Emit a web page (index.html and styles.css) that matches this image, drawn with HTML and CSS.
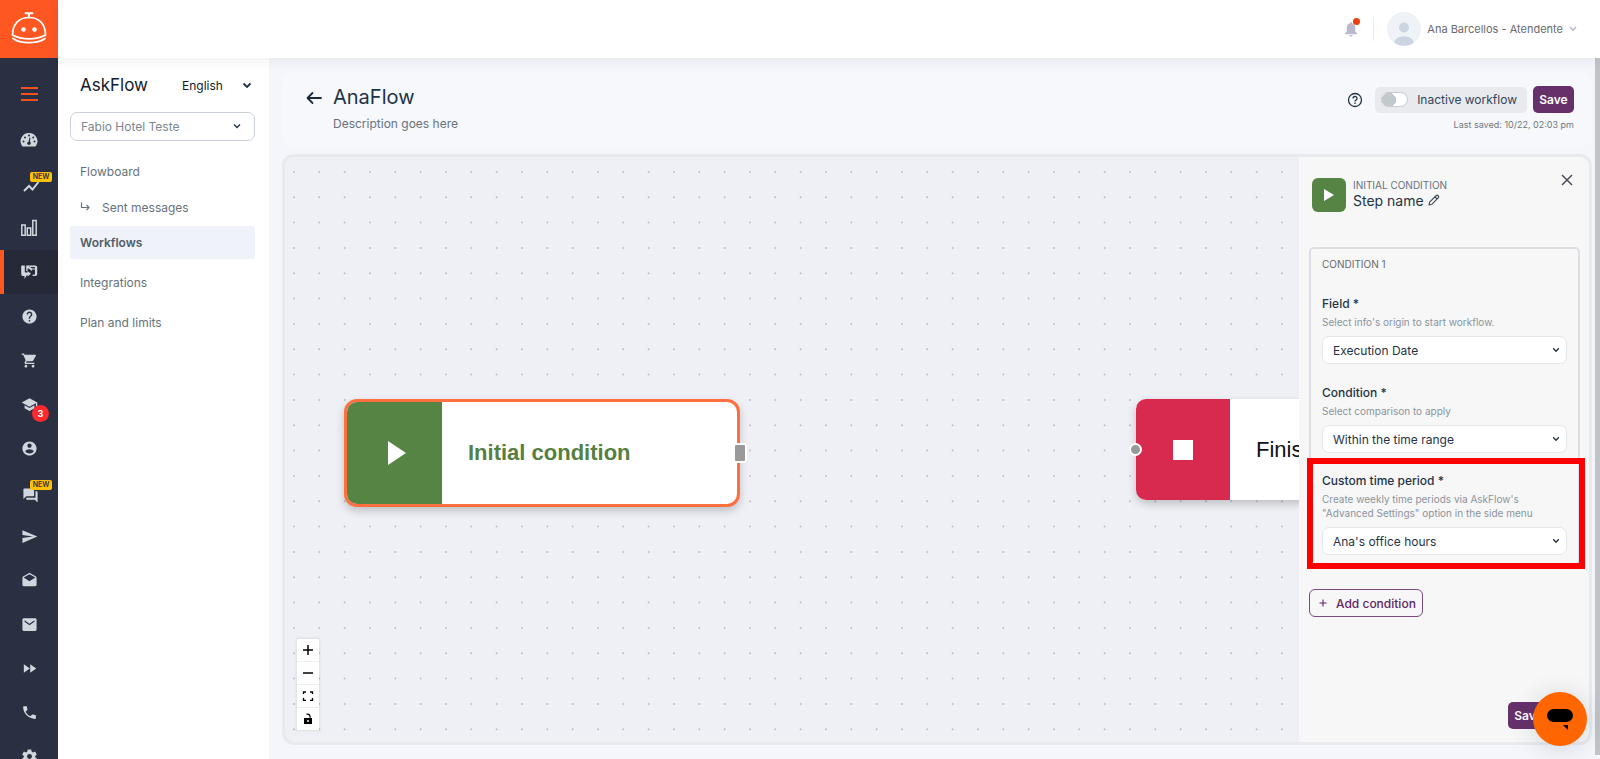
FILE: index.html
```
<!DOCTYPE html>
<html lang="en">
<head>
<meta charset="utf-8">
<title>AskFlow - Workflows</title>
<link rel="stylesheet" href="styles.css">
</head>
<body>

<!-- icon rail -->
<nav class="rail">
  <a class="logo" href="#" aria-label="Home">
    <svg width="36" height="32" viewBox="0 0 36 32" fill="none" stroke="#fff" stroke-width="1.700" stroke-linecap="round">
      <path d="M14.500 1.300h7M18 1.500v4" stroke-width="2"/>
      <path d="M1.500 23C1.500 12 8 5.500 18 5.500S34.500 12 34.500 23C30 25.500 25 26.800 18 26.800S6 25.500 1.500 23z"/>
      <path d="M2 26.500c4 3 9.500 4.200 16 4.200s12-1.200 16-4.200"/>
      <circle cx="12.500" cy="17.500" r="2.300" fill="#fff" stroke="none"/>
      <circle cx="23.500" cy="17.500" r="2.300" fill="#fff" stroke="none"/>
    </svg>
  </a>
  <button class="burger" aria-label="Menu"><span></span><span></span><span></span></button>
  <a class="item" href="#" aria-label="Dashboard">
    <svg width="18" height="16" viewBox="0 0 18 16"><path d="M9 1a8.300 8.300 0 0 0-7.100 12.800q.3.600 1 .6h12.200q.7 0 1-.6A8.300 8.300 0 0 0 9 1z"/><g fill="#2a2f42"><circle cx="3.500" cy="9.500" r="1"/><circle cx="5" cy="5.500" r="1"/><circle cx="9" cy="3.600" r="1"/><circle cx="13.200" cy="5.500" r="1"/><circle cx="14.500" cy="9.500" r="1"/><circle cx="9" cy="11.300" r="1.800"/><path d="M8.400 11l1-5.500 1 .2-.6 5.600z"/></g></svg>
  </a>
  <a class="item low" href="#" aria-label="Trends">
    <svg width="18" height="14" viewBox="0 0 18 14"><path d="M2 11l5-5 3.500 3.500L16.500 2" fill="none" stroke="#cfd8dc" stroke-width="2"/></svg>
    <span class="new">NEW</span>
  </a>
  <a class="item" href="#" aria-label="Reports">
    <svg width="18" height="18" viewBox="0 0 18 18"><path d="M1.800 6h3.400v10.300H1.800zM7.300 9h3.400v7.300H7.300zM12.800 1.500h3.400v14.800h-3.400z" fill="none" stroke="#cfd8dc" stroke-width="1.500"/></svg>
  </a>
  <a class="item active" href="#" aria-label="AskFlow">
    <svg width="18" height="16" viewBox="0 0 18 16"><path d="M2 1.500h2.800v6.300q0 .7.700.7h2V7L11 9.800l-3.500 2.800V11H7l-2.500 4v-3H3q-1.800 0-1.800-2V2.300q0-.8.8-.8zM6.200 1.500h9.300q1.700 0 1.700 1.700v7q0 1.800-1.700 1.800h-3.300l1-1.500H15V5.500h-3V7L8.700 4.600H7.500V7H6.200z"/><path d="M9 2.200l3 2.200h3V3H9z" fill="#252938"/></svg>
  </a>
  <a class="item" href="#" aria-label="Help">
    <svg width="17" height="17" viewBox="0 0 24 24"><path d="M12 2C6.480 2 2 6.480 2 12s4.480 10 10 10 10-4.480 10-10S17.520 2 12 2zm1 17h-2v-2h2v2zm2.070-7.750l-.9.920C13.450 12.900 13 13.500 13 15h-2v-.5c0-1.100.450-2.100 1.170-2.830l1.240-1.260c.370-.360.590-.860.590-1.410 0-1.100-.9-2-2-2s-2 .9-2 2H8c0-2.210 1.790-4 4-4s4 1.790 4 4c0 .880-.360 1.680-.930 2.250z"/></svg>
  </a>
  <a class="item" href="#" aria-label="Shop">
    <svg width="17" height="17" viewBox="0 0 24 24"><path d="M7 18c-1.100 0-1.990.9-1.990 2S5.900 22 7 22s2-.9 2-2-.9-2-2-2zM1 2v2h2l3.600 7.590-1.350 2.450c-.160.280-.250.610-.250.960 0 1.100.9 2 2 2h12v-2H7.420c-.140 0-.250-.110-.250-.250l.03-.120.9-1.630h7.450c.750 0 1.410-.410 1.750-1.030l3.580-6.490A1 1 0 0 0 20 4H5.210l-.940-2H1zm16 16c-1.100 0-1.990.9-1.990 2s.890 2 1.990 2 2-.9 2-2-.9-2-2-2z"/></svg>
  </a>
  <a class="item" href="#" aria-label="Academy">
    <svg width="17" height="17" viewBox="0 0 24 24"><path d="M5 13.180v4L12 21l7-3.820v-4L12 17l-7-3.820zM12 3L1 9l11 6 9-4.910V17h2V9L12 3z"/></svg>
    <span class="count">3</span>
  </a>
  <a class="item" href="#" aria-label="Account">
    <svg width="17" height="17" viewBox="0 0 24 24"><path d="M12 2C6.480 2 2 6.480 2 12s4.480 10 10 10 10-4.480 10-10S17.520 2 12 2zm0 3c1.660 0 3 1.340 3 3s-1.340 3-3 3-3-1.340-3-3 1.340-3 3-3zm0 14.200c-2.500 0-4.710-1.280-6-3.220.03-1.990 4-3.080 6-3.080 1.990 0 5.970 1.090 6 3.080-1.290 1.940-3.500 3.220-6 3.220z"/></svg>
  </a>
  <a class="item low" href="#" aria-label="Chats">
    <svg width="17" height="17" viewBox="0 0 24 24"><path d="M21 6h-2v9H6v2c0 .550.450 1 1 1h11l4 4V7c0-.550-.450-1-1-1zm-4 6V3c0-.550-.450-1-1-1H3c-.550 0-1 .450-1 1v14l4-4h10c.550 0 1-.450 1-1z"/></svg>
    <span class="new">NEW</span>
  </a>
  <a class="item" href="#" aria-label="Send">
    <svg width="17" height="17" viewBox="0 0 24 24"><path d="M2.010 21L23 12 2.010 3 2 10l15 2-15 2z"/></svg>
  </a>
  <a class="item" href="#" aria-label="Drafts">
    <svg width="17" height="17" viewBox="0 0 24 24"><path d="M21.990 8c0-.720-.370-1.350-.940-1.700L12 1 2.950 6.300C2.380 6.650 2 7.280 2 8v10c0 1.100.9 2 2 2h16c1.100 0 2-.9 2-2l-.010-10zM12 13L3.740 7.840 12 3l8.260 4.840L12 13z"/></svg>
  </a>
  <a class="item" href="#" aria-label="Mail">
    <svg width="17" height="17" viewBox="0 0 24 24"><path d="M20 3H4c-1.100 0-2 .9-2 2v14c0 1.100.9 2 2 2h16c1.100 0 2-.9 2-2V5c0-1.100-.9-2-2-2zm-1 5l-7 5-7-5V6l7 5 7-5v2z"/></svg>
  </a>
  <a class="item" href="#" aria-label="Forward">
    <svg width="17" height="17" viewBox="0 0 24 24"><path d="M4 18l8.500-6L4 6v12zm9-12v12l8.500-6L13 6z"/></svg>
  </a>
  <a class="item" href="#" aria-label="Calls">
    <svg width="17" height="17" viewBox="0 0 24 24"><path d="M6.620 10.790c1.440 2.830 3.760 5.140 6.590 6.590l2.200-2.200c.270-.270.670-.360 1.020-.240 1.120.370 2.330.570 3.570.570.550 0 1 .450 1 1V20c0 .550-.450 1-1 1-9.390 0-17-7.610-17-17 0-.550.450-1 1-1h3.500c.550 0 1 .450 1 1 0 1.250.2 2.450.570 3.570.110.350.030.740-.250 1.020l-2.200 2.200z"/></svg>
  </a>
  <a class="item" href="#" aria-label="Settings">
    <svg width="17" height="17" viewBox="0 0 24 24"><path fill-rule="evenodd" d="M9.500 2h5l.5 3 2 1.200 2.900-1.100 2.400 4.200-2.300 1.900v1.700l2.300 1.900-2.400 4.200-2.900-1.100L15 19l-.5 3h-5L9 19l-2-1.200-2.900 1.100-2.400-4.200L4 12.900v-1.700L1.700 9.300l2.400-4.200L7 6.200 9 5zM12 8.500a3.500 3.500 0 1 0 0 7 3.500 3.500 0 0 0 0-7z"/></svg>
  </a>
</nav>

<div class="page">
  <header class="topbar">
    <button class="bell" aria-label="Notifications">
      <svg width="14" height="16" viewBox="0 0 14 16"><path d="M7 1q-1 0-1 1.200C3.500 2.800 2.800 5 2.800 7v3.500L1 12.300v.9h12v-.9l-1.800-1.800V7c0-2-.7-4.200-3.200-4.800Q8 1 7 1zM5.400 14a1.600 1.600 0 0 0 3.200 0z" fill="#b8b9cb"/></svg>
      <span class="dot"></span>
    </button>
    <button class="user">
      <svg class="avatar" width="34" height="34" viewBox="0 0 34 34"><circle cx="17" cy="17" r="17" fill="#eff3f7"/><circle cx="17" cy="15.500" r="5" fill="#cbd5e2"/><path d="M7 30.500a10.500 9 0 0 1 20 0A17 17 0 0 1 7 30.500z" fill="#cbd5e2"/></svg>
      <span>Ana Barcellos - Atendente</span>
      <svg width="8" height="6" viewBox="0 0 8 6"><path d="M1 1l3 3.300L7 1" fill="none" stroke="#b3b5c9" stroke-width="1.300"/></svg>
    </button>
  </header>

  <div class="body">
    <aside class="side">
      <div class="side-head">
        <h1>AskFlow</h1>
        <div class="pick lang">
          <select aria-label="Language"><option>English</option></select>
          <svg width="10" height="7" viewBox="0 0 10 7"><path d="M1.500 1.500L5 5l3.500-3.500"/></svg>
        </div>
      </div>
      <div class="pick hotel">
        <select aria-label="Hotel"><option>Fabio Hotel Teste</option></select>
        <svg width="10" height="7" viewBox="0 0 10 7"><path d="M2 1.500l3 3 3-3"/></svg>
      </div>
      <ul class="menu">
        <li><a href="#">Flowboard</a></li>
        <li class="sub"><a href="#"><svg width="10" height="11" viewBox="0 0 10 11"><path d="M1.500.500V5.500H9M6.500 2.800L9 5.500 6.500 8.200" fill="none" stroke="#66727c" stroke-width="1.200"/></svg>Sent messages</a></li>
        <li class="on"><a href="#">Workflows</a></li>
        <li><a href="#">Integrations</a></li>
        <li><a href="#">Plan and limits</a></li>
      </ul>
    </aside>

    <main class="main">
      <section class="flow-head">
        <button class="back" aria-label="Back">
          <svg width="16" height="14" viewBox="0 0 16 14"><path d="M6.500 2L1.500 7l5 5M1.800 7H15" fill="none" stroke="#1b2b3c" stroke-width="1.800" stroke-linecap="round" stroke-linejoin="round"/></svg>
        </button>
        <div class="title">
          <h2>AnaFlow</h2>
          <p>Description goes here</p>
        </div>
        <div class="tools">
          <div class="tools-row">
            <button class="help" aria-label="Help">
              <svg width="16" height="16" viewBox="0 0 16 16" fill="none" stroke="#1f3347" stroke-width="1.300"><circle cx="8" cy="8" r="6.500"/><path d="M6 6.500a2 2 0 1 1 3 1.700q-1 .5-1 1.300"/><path d="M8 10.600v1.300"/></svg>
            </button>
            <label class="toggle"><input type="checkbox">Inactive workflow</label>
            <button class="save">Save</button>
          </div>
          <p>Last saved: 10/22, 02:03 pm</p>
        </div>
      </section>

      <section class="board">
        <div class="canvas">
          <svg class="dots" width="100%" height="100%">
            <defs>
              <pattern id="dots" x="7" y="13" width="76" height="76" patternUnits="userSpaceOnUse">
                <g fill="#bcbfc5">
                  <circle cx="2" cy="2" r="1"/><circle cx="27.300" cy="2" r="1"/><circle cx="52.600" cy="2" r="1"/>
                  <circle cx="2" cy="27.300" r="1"/><circle cx="27.300" cy="27.300" r="1"/><circle cx="52.600" cy="27.300" r="1"/>
                  <circle cx="2" cy="52.600" r="1"/><circle cx="27.300" cy="52.600" r="1"/><circle cx="52.600" cy="52.600" r="1"/>
                </g>
              </pattern>
            </defs>
            <rect width="100%" height="100%" fill="url(#dots)"/>
          </svg>

          <div class="node start">
            <div class="node-icon"><svg width="22" height="24" viewBox="0 0 22 24"><path d="M4 0l18 12L4 24z" fill="#fff"/></svg></div>
            <div class="node-name">Initial condition</div>
            <span class="port out"></span>
          </div>
          <div class="node finish">
            <div class="node-icon"><svg width="20" height="20" viewBox="0 0 20 20"><path d="M0 0h20v20H0z" fill="#fff"/></svg></div>
            <div class="node-name">Finish</div>
            <span class="port in"></span>
          </div>

          <div class="zoom">
            <button aria-label="Zoom in"><svg width="12" height="12" viewBox="0 0 12 12"><path d="M6 1v10M1 6h10" stroke="#000" stroke-width="1.500"/></svg></button>
            <button aria-label="Zoom out"><svg width="12" height="12" viewBox="0 0 12 12"><path d="M1 6h10" stroke="#000" stroke-width="1.500"/></svg></button>
            <button aria-label="Fit view"><svg width="12" height="12" viewBox="0 0 12 12"><path d="M1.500 4V2H4M8 2h2.500v2M10.500 8v2.300H8M4 10.300H1.500V8" fill="none" stroke="#000" stroke-width="1.300"/></svg></button>
            <button aria-label="Lock"><svg width="12" height="12" viewBox="0 0 12 12"><path d="M2 5h8v6H2z"/><path d="M4.500 1.200Q8.200.500 8.200 4.800" fill="none" stroke="#000" stroke-width="1.300"/><circle cx="6" cy="8" r="1" fill="#fff"/></svg></button>
          </div>
        </div>

        <form class="panel">
          <div class="panel-head">
            <div class="badge"><svg width="10" height="12" viewBox="0 0 10 12"><path d="M0 0l10 6-10 6z" fill="#fff"/></svg></div>
            <div class="step">
              <small>INITIAL CONDITION</small>
              <h3>Step name <svg width="12" height="12" viewBox="0 0 12 12"><path d="M1 11l.6-2.800L8.300 1.500q.8-.8 1.700 0l.4.500q.8.800 0 1.600L3.800 10.300zM7 2.800L9.200 5" fill="none" stroke="#3c4650" stroke-width="1.100" stroke-linejoin="round"/></svg></h3>
            </div>
            <button type="button" class="close" aria-label="Close"><svg width="12" height="12" viewBox="0 0 12 12"><path d="M1 1l10 10M11 1L1 11" stroke="#4a4f55" stroke-width="1.500"/></svg></button>
          </div>

          <fieldset class="cond">
            <h4>CONDITION 1</h4>
            <div class="field">
              <label for="f-field">Field *</label>
              <p>Select info's origin to start workflow.</p>
              <div class="pick">
                <select id="f-field"><option>Execution Date</option></select>
                <svg width="8" height="6" viewBox="0 0 8 6"><path d="M1.200 1.300L4 4.200l2.800-2.900"/></svg>
              </div>
            </div>
            <div class="field">
              <label for="f-cond">Condition *</label>
              <p>Select comparison to apply</p>
              <div class="pick">
                <select id="f-cond"><option>Within the time range</option></select>
                <svg width="8" height="6" viewBox="0 0 8 6"><path d="M1.200 1.300L4 4.200l2.800-2.900"/></svg>
              </div>
            </div>
            <div class="field marked">
              <label for="f-time">Custom time period *</label>
              <p>Create weekly time periods via AskFlow's "Advanced Settings" option in the side menu</p>
              <div class="pick">
                <select id="f-time"><option>Ana's office hours</option></select>
                <svg width="8" height="6" viewBox="0 0 8 6"><path d="M1.200 1.300L4 4.200l2.800-2.900"/></svg>
              </div>
            </div>
          </fieldset>

          <button type="button" class="add"><svg width="8" height="8" viewBox="0 0 8 8"><path d="M4 .500v7M.500 4h7" stroke="#5f2566" stroke-width="1.100"/></svg>Add condition</button>
          <button type="button" class="save panel-save">Save</button>
        </form>
      </section>
    </main>
    <div class="scroll"></div>
  </div>
</div>

<button class="chat" aria-label="Open chat">
  <svg width="28" height="24" viewBox="0 0 28 24"><rect x="1" y="2" width="26" height="13" rx="6.500"/><path d="M17 18h5v5z"/></svg>
</button>

</body>
</html>
```

FILE: styles.css
```
* {
  box-sizing: border-box;
}

body {
  margin: 0;
  height: 100vh;
  display: flex;
  overflow: hidden;
  font-family: Inter, "Liberation Sans", sans-serif;
  font-size: 12px;
  color: #1f3347;
  background: #f4f6fb;
}

h1, h2, h3, h4, p, ul, fieldset {
  margin: 0;
  padding: 0;
  font-weight: 400;
}

button, select, input {
  font: inherit;
  color: inherit;
  margin: 0;
}

button {
  border: 0;
  padding: 0;
  background: none;
  display: flex;
  align-items: center;
  justify-content: center;
}

a {
  color: inherit;
  text-decoration: none;
}

svg {
  flex: none;
}

/* rail */
.rail {
  width: 58px;
  flex: none;
  background: #2a2f42;
  fill: #cfd8dc;
}

.logo {
  height: 58px;
  display: flex;
  align-items: center;
  justify-content: center;
  padding-bottom: 3px;
  background: #ff5722;
}

.burger {
  width: 58px;
  height: 60px;
  padding-top: 12px;
  flex-direction: column;
  gap: 4px;
}

.burger span {
  width: 17px;
  height: 2px;
  background: #f4511e;
}

.item {
  position: relative;
  height: 44px;
  display: flex;
  align-items: center;
  justify-content: center;
}

.item.low {
  padding: 6px 0 0 3px;
}

.item.active {
  background: #252938;
  border-left: 4px solid #ff5722;
  padding-right: 4px;
}

.new {
  position: absolute;
  top: 10px;
  left: 30px;
  width: 22px;
  border-radius: 2px;
  background: #ffc107;
  color: #2a2f42;
  font-size: 7px;
  font-weight: 600;
  line-height: 10px;
  text-align: center;
}

.count {
  position: absolute;
  top: 23px;
  left: 32px;
  width: 17px;
  border-radius: 50%;
  background: #ff2a2f;
  color: #fff;
  font-size: 9px;
  font-weight: 700;
  line-height: 17px;
  text-align: center;
}

/* top bar */
.page {
  flex: 1;
  min-width: 0;
  display: flex;
  flex-direction: column;
}

.topbar {
  position: relative;
  z-index: 1;
  height: 58px;
  flex: none;
  display: flex;
  align-items: center;
  justify-content: flex-end;
  padding-right: 23px;
  background: #fff;
  box-shadow: 0 1px 12px rgba(60, 60, 80, 0.1);
}

.bell {
  position: relative;
  margin-right: 15px;
}

.dot {
  position: absolute;
  top: -3px;
  right: -2px;
  width: 7px;
  height: 7px;
  border-radius: 50%;
  background: #e8400c;
}

.user {
  padding-left: 14px;
  gap: 6px;
  color: #6a6a6e;
  font-size: 11px;
  background: linear-gradient(#ececf0, #ececf0) left center / 1px 24px no-repeat;
}

.body {
  flex: 1;
  min-height: 0;
  display: flex;
}

/* side menu */
.side {
  width: 211px;
  flex: none;
  padding: 13px 14px 0 12px;
  background: #fff;
}

.side-head {
  display: flex;
  align-items: center;
  height: 28px;
  padding-left: 10px;
  color: #121a2a;
}

.side h1 {
  flex: 1;
  font-size: 17px;
}

.pick {
  position: relative;
  display: flex;
  align-items: center;
}

.pick select {
  appearance: none;
  flex: 1;
  width: 100%;
  height: 28px;
  padding: 0 10px;
  border: 1px solid #e3e6ea;
  border-radius: 7px;
  background: #fff;
  outline: 0;
}

.pick svg {
  position: absolute;
  right: 7px;
  fill: none;
  stroke: #22303f;
  stroke-width: 1.3;
  pointer-events: none;
}

.lang {
  width: 73px;
}

.lang select {
  border: 0;
  padding: 0;
}

.lang svg {
  right: 3px;
  stroke-width: 1.8;
}

.hotel {
  margin: 13px 0 14px;
}

.hotel select {
  height: 29px;
  border-color: #ccd2da;
  color: #7c868f;
}

.hotel svg {
  right: 13px;
}

.menu {
  list-style: none;
}

.menu a {
  display: flex;
  align-items: center;
  height: 33px;
  padding-left: 10px;
  margin-bottom: 7px;
  border-radius: 3px;
  color: #66727c;
}

.menu .sub a {
  margin: -4px 0 2px;
  gap: 12px;
}

.menu .on a {
  background: #eff2f8;
  color: #525e69;
  font-weight: 600;
}

/* flow header */
.main {
  flex: 1;
  min-width: 0;
  display: flex;
  flex-direction: column;
  gap: 7px;
  padding: 14px 3px 14px 13px;
}

.flow-head {
  display: flex;
  align-items: flex-start;
  height: 75px;
  flex: none;
  padding: 14px 18px 0 24px;
  border-radius: 10px;
  background: #f6f8fc;
}

.back {
  height: 24px;
  margin-right: 11px;
}

.title {
  flex: 1;
}

.title h2 {
  font-size: 20px;
  line-height: 22px;
}

.title p {
  margin-top: 8px;
  line-height: 16px;
  color: #66727c;
}

.tools-row {
  display: flex;
  align-items: center;
  gap: 6px;
}

.help {
  margin-right: 6px;
}

.toggle {
  display: flex;
  align-items: center;
  gap: 9px;
  height: 26px;
  padding: 0 10px 0 6px;
  border-radius: 5px;
  background: #e8eaee;
  color: #33455a;
}

.toggle input {
  appearance: none;
  width: 27px;
  height: 15px;
  border: 1px solid #c4cacf;
  border-radius: 8px;
  background: radial-gradient(circle at 7px 7px, #c2c8cc 7px, #fff 7px);
}

.save {
  width: 41px;
  height: 27px;
  border-radius: 5px;
  background: #66306b;
  color: #fff;
  font-weight: 600;
}

.tools p {
  margin-top: 5px;
  font-size: 9px;
  line-height: 14px;
  text-align: right;
  color: #707880;
}

/* board */
.board {
  flex: 1;
  min-height: 0;
  display: flex;
  overflow: hidden;
  border: 3px solid #e9eaed;
  border-radius: 12px;
  background: #eef0f5;
}

.canvas {
  position: relative;
  flex: 1;
  min-width: 0;
  overflow: hidden;
}

.dots {
  display: block;
}

.node {
  position: absolute;
  top: 242px;
  width: 390px;
  height: 101px;
  display: flex;
  align-items: stretch;
  border-radius: 11px;
  background: #fff;
  box-shadow: 0 4px 8px rgba(0, 0, 0, 0.2);
  font-family: "Liberation Sans", Arial, sans-serif;
  font-size: 22px;
  color: #111;
}

.node-icon {
  width: 94px;
  display: flex;
  align-items: center;
  justify-content: center;
  border-radius: 10px 0 0 10px;
}

.node-name {
  display: flex;
  align-items: center;
  padding-left: 26px;
}

.start {
  left: 59px;
  width: 396px;
  height: 108px;
  border: 3px solid #ff6f3f;
  border-radius: 13px;
  color: #55803f;
  font-weight: 700;
}

.start .node-icon {
  width: 95px;
  background: #568444;
}

.finish {
  left: 851px;
}

.finish .node-icon {
  background: #d82a4e;
}

.port {
  position: absolute;
  background: #999;
  border: 2px solid #fff;
}

.out {
  right: -10px;
  top: 41px;
  width: 14px;
  height: 20px;
  border-radius: 3px;
}

.in {
  left: -7px;
  top: 44px;
  width: 13px;
  height: 13px;
  border-radius: 50%;
}

.zoom {
  position: absolute;
  left: 12px;
  bottom: 12px;
  box-shadow: 0 0 2px 1px rgba(0, 0, 0, 0.08);
}

.zoom button {
  width: 22px;
  height: 22px;
  background: #fefefe;
}

.zoom button + button {
  height: 23px;
  border-top: 1px solid #eee;
}

/* step panel */
.panel {
  width: 290px;
  flex: none;
  display: flex;
  flex-direction: column;
  align-items: flex-start;
  padding: 21px 9px 13px 10px;
  background: #f7f7f7;
}

.panel-head {
  align-self: stretch;
  display: flex;
  gap: 7px;
  padding-left: 3px;
}

.badge {
  width: 34px;
  height: 34px;
  display: flex;
  align-items: center;
  justify-content: center;
  border-radius: 6px;
  background: #568444;
}

.step {
  flex: 1;
}

.step small {
  display: block;
  font-size: 10px;
  line-height: 14px;
  color: #66727c;
}

.step h3 {
  font-size: 14px;
  line-height: 18px;
}

.close {
  width: 26px;
  height: 4px;
}

.cond {
  align-self: stretch;
  min-width: 0;
  margin-top: 35px;
  padding: 8px 11px 9px;
  border: 2px solid #dcdfe4;
  border-radius: 5px;
}

.cond h4 {
  margin-bottom: 25px;
  font-size: 10px;
  line-height: 14px;
  color: #66696d;
}

.field {
  margin-bottom: 21px;
}

.field label {
  display: block;
  line-height: 16px;
  font-weight: 500;
}

.field p {
  margin: 3px 0 7px;
  font-size: 10px;
  line-height: 14px;
  color: #8a949d;
}

.field.marked {
  margin: -16px -18px -15px -15px;
  padding: 9px 12px 8px 9px;
  border: 6px solid #f00;
}

.add {
  margin-top: 24px;
  gap: 9px;
  height: 28px;
  padding: 0 6px 0 9px;
  border: 1px solid #7b4a80;
  border-radius: 6px;
  color: #5f2566;
  font-weight: 500;
}

.panel-save {
  flex: none;
  margin: auto 31px 0 auto;
}

.scroll {
  width: 5px;
  margin-bottom: 4px;
  background: #c1c3c6;
}

.chat {
  position: fixed;
  right: 13px;
  bottom: 13px;
  width: 54px;
  height: 54px;
  border-radius: 50%;
  background: #ff6600;
  box-shadow: 0 2px 24px rgba(0, 40, 60, 0.16);
}
```
